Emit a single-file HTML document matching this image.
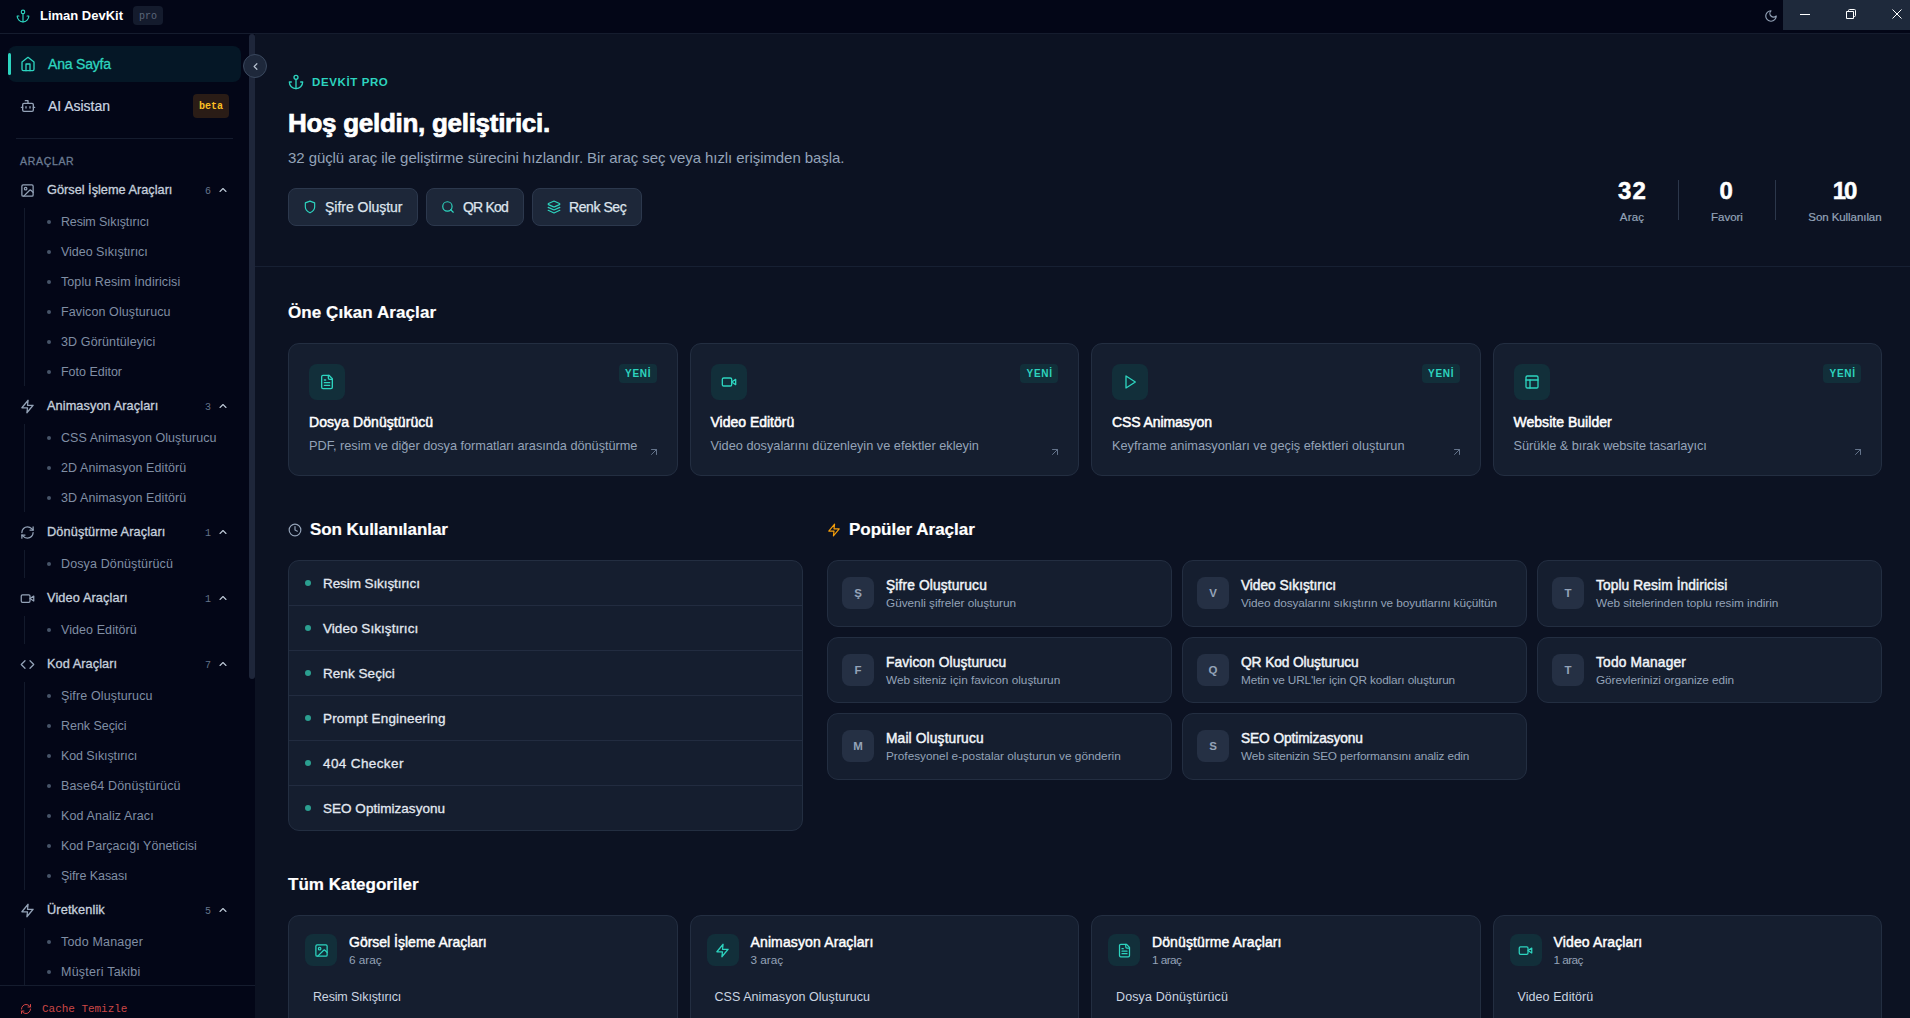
<!DOCTYPE html><html lang="tr"><head><meta charset="utf-8"><title>Liman DevKit</title><style>*{box-sizing:border-box;margin:0;padding:0}
html,body{width:1910px;height:1018px;overflow:hidden;background:#0c1222;font-family:"Liberation Sans",sans-serif;color:#e2e8f0}
.abs{position:absolute;white-space:nowrap}
#tb{position:absolute;left:0;top:0;width:1910px;height:34px;background:#030617;border-bottom:1px solid #151c2e;overflow:hidden}
.brand{left:40px;top:8px;color:#fff;line-height:16px}
.pro{left:133px;top:6px;width:30px;height:19px;border-radius:4px;background:#141b2d;color:#5b667a;font-family:"Liberation Mono",monospace;font-size:10px;line-height:21px;text-align:center}
.wc{left:1783px;top:0;width:127px;height:30px;background:#1e293b}
#sb{position:absolute;left:0;top:34px;width:255px;height:984px;background:#030617;overflow:hidden}
#sb>.abs{margin-top:-34px}
.navact{left:8px;top:46px;width:233px;height:36px;border-radius:8px;background:#051726}
.navbar{left:8px;top:53px;width:3px;height:22px;border-radius:2px;background:#2dd4bf}
.nav{line-height:16px}
.beta{left:193px;top:94px;width:36px;height:24px;border-radius:4px;background:#2a1c16;color:#fbbf24;font-family:"Liberation Mono",monospace;font-weight:700;font-size:10px;line-height:26px;text-align:center}
.sdiv{left:16px;top:138px;width:217px;height:1px;background:#151c2e}
.slabel{left:20px;top:155px;color:#6b7b92;line-height:12px;-webkit-text-stroke:0.3px #6b7b92}
.gname{left:47px;color:#c5cfdc;line-height:20px;-webkit-text-stroke:0.32px #c5cfdc}
.gcnt{left:205px;font-family:"Liberation Mono",monospace;font-size:10px;color:#64748b;line-height:14px}
.gline{left:24px;width:1px;background:#131a2c}
.dot{left:47px;width:4px;height:4px;border-radius:2px;background:#475569}
.sub{left:61px;line-height:18px;color:#808ea4}
.sfoot{left:0;top:985px;width:255px;height:40px;border-top:1px solid #151c2e;background:#030617}
.cache{left:42px;top:15px;line-height:16px;color:#cc4646}
.thumb{left:249px;top:34px;width:6px;height:645px;border-radius:3px;background:#1e263a}
#mn{position:absolute;left:255px;top:34px;width:1655px;height:984px;background:#0c1222;overflow:hidden}
#mn>.abs{margin-left:-255px;margin-top:-34px}
.hero{left:255px;top:34px;width:1655px;height:233px;border-bottom:1px solid #172033}
.hlabel{left:312px;top:75px;color:#2dd4bf;line-height:14px}
.htitle{left:288px;top:107px;color:#fff;line-height:32px;-webkit-text-stroke:0.7px #fff}
.hsub{left:288px;top:149px;line-height:18px;color:#94a3b8}
.qbtn{top:188px;height:38px;border-radius:8px;background:#1d2739;border:1px solid #2c384d}
.qt{left:36px;top:9px;line-height:18px;color:#dde4ed;-webkit-text-stroke:0.25px #dde4ed}
.sn{top:177px;color:#fff;line-height:28px;-webkit-text-stroke:0.5px #fff}
.sl{top:210px;color:#94a3b8;line-height:14px;-webkit-text-stroke:0.2px #94a3b8}
.svd{top:180px;width:1px;height:40px;background:#2c374b}
.h2{color:#fff;line-height:24px;-webkit-text-stroke:0.2px #fff}
.card{background:#151e2f;border:1px solid #232e41;border-radius:11px;overflow:hidden}
.ibox{border-radius:8px;background:#122f3a;display:flex;align-items:center;justify-content:center}
.yeni{right:20px;top:20px;width:38px;height:19px;border-radius:4px;background:#122f3a}
.yt{left:6.500px;top:0;color:#2dd4bf;line-height:19px}
.ft{left:20px;top:68px;color:#fff;line-height:20px;-webkit-text-stroke:0.5px #fff}
.fd{left:20px;top:93px;color:#94a3b8;line-height:18px}
.rdiv{left:0;width:515px;height:1px;background:#222c40}
.rdot{left:16px;width:6px;height:6px;border-radius:3px;background:#2b9f90}
.rt{left:34px;line-height:18px;color:#e2e8f0;-webkit-text-stroke:0.3px #e2e8f0}
.lbox{left:14px;top:16px;width:32px;height:32px;border-radius:8px;background:#253044;color:#94a3b8;font-size:11.500px;font-weight:700;line-height:32px;text-align:center}
.pt{left:58px;top:15px;color:#f1f5f9;line-height:20px;-webkit-text-stroke:0.45px #f1f5f9}
.pd{left:58px;top:34px;color:#94a3b8;line-height:16px}
.ct{left:60px;top:16px;color:#fff;line-height:20px;-webkit-text-stroke:0.45px #fff}
.cs{left:60px;top:36px;color:#94a3b8;line-height:16px}
.ci{left:24px;top:72px;color:#cbd5e1;line-height:18px}
.colbtn{left:243px;top:54px;width:24px;height:24px;border-radius:12px;background:#1e283b;border:1px solid #3a485e;display:flex;align-items:center;justify-content:center}
.brand{font-family:"Liberation Sans",sans-serif;font-size:13px;font-weight:700}
.nav{font-family:"Liberation Sans",sans-serif;font-size:14px;font-weight:400}
.slabel{font-family:"Liberation Sans",sans-serif;font-size:10.5px;font-weight:400}
.gname{font-family:"Liberation Sans",sans-serif;font-size:12.75px;font-weight:400}
.sub{font-family:"Liberation Sans",sans-serif;font-size:12.5px;font-weight:400}
.cache{font-family:"Liberation Mono",monospace;font-size:11px;font-weight:400}
.hlabel{font-family:"Liberation Sans",sans-serif;font-size:11.5px;font-weight:700}
.htitle{font-family:"Liberation Sans",sans-serif;font-size:26px;font-weight:700}
.hsub{font-family:"Liberation Sans",sans-serif;font-size:15px;font-weight:400}
.qt{font-family:"Liberation Sans",sans-serif;font-size:14px;font-weight:400}
.sn{font-family:"Liberation Sans",sans-serif;font-size:24px;font-weight:700}
.sl{font-family:"Liberation Sans",sans-serif;font-size:11.5px;font-weight:400}
.h2{font-family:"Liberation Sans",sans-serif;font-size:17px;font-weight:700}
.yt{font-family:"Liberation Sans",sans-serif;font-size:10px;font-weight:700}
.ft{font-family:"Liberation Sans",sans-serif;font-size:14px;font-weight:400}
.fd{font-family:"Liberation Sans",sans-serif;font-size:12.75px;font-weight:400}
.rt{font-family:"Liberation Sans",sans-serif;font-size:13.5px;font-weight:400}
.pt{font-family:"Liberation Sans",sans-serif;font-size:13.75px;font-weight:400}
.pd{font-family:"Liberation Sans",sans-serif;font-size:11.8px;font-weight:400}
.ct{font-family:"Liberation Sans",sans-serif;font-size:14px;font-weight:400}
.cs{font-family:"Liberation Sans",sans-serif;font-size:11.8px;font-weight:400}
.ci{font-family:"Liberation Sans",sans-serif;font-size:12.5px;font-weight:400}
</style></head><body>
<div id="tb">
<div class="abs" style="left:16px;top:9px"><svg width="14" height="14" viewBox="0 0 24 24" fill="none" stroke="#2dd4bf" stroke-width="2" stroke-linecap="round" stroke-linejoin="round" style="display:block;flex:none;"><path d="M12 22V8"/><path d="M5 12H2a10 10 0 0 0 20 0h-3"/><circle cx="12" cy="5" r="3"/></svg></div>
<div class="abs brand " style="letter-spacing:-0.007px">Liman DevKit</div>
<div class="abs pro"><span>pro</span></div>
<div class="abs" style="left:1764px;top:9px"><svg width="14" height="14" viewBox="0 0 24 24" fill="none" stroke="#94a3b8" stroke-width="2" stroke-linecap="round" stroke-linejoin="round" style="display:block;flex:none;"><path d="M12 3a6 6 0 0 0 9 9 9 9 0 1 1-9-9Z"/></svg></div>
<div class="abs wc"></div>
<svg class="abs" style="left:1783px;top:0" width="127" height="30" viewBox="0 0 127 30" fill="none" stroke="#fff" stroke-width="1"><path d="M17 14.5h10"/><path d="M63.500 11.500h7v7h-7z"/><path d="M65.500 11.500v-1a1 1 0 0 1 1-1h5a1 1 0 0 1 1 1v5a1 1 0 0 1-1 1h-1"/><path d="M109.500 9.500l9 9M118.500 9.500l-9 9"/></svg>
</div>
<div id="sb">
<div class="abs navact"></div><div class="abs navbar"></div>
<div class="abs" style="left:20px;top:56px"><svg width="16" height="16" viewBox="0 0 24 24" fill="none" stroke="#2dd4bf" stroke-width="2" stroke-linecap="round" stroke-linejoin="round" style="display:block;flex:none;"><path d="m3 9 9-7 9 7v11a2 2 0 0 1-2 2H5a2 2 0 0 1-2-2z"/><polyline points="9 22 9 12 15 12 15 22"/></svg></div>
<div class="abs nav " style="left:48px;top:56px;color:#2dd4bf;-webkit-text-stroke:0.3px #2dd4bf;letter-spacing:-0.201px">Ana Sayfa</div>
<div class="abs" style="left:20px;top:98px"><svg width="16" height="16" viewBox="0 0 24 24" fill="none" stroke="#94a3b8" stroke-width="2" stroke-linecap="round" stroke-linejoin="round" style="display:block;flex:none;"><path d="M12 8V4H8"/><rect width="16" height="12" x="4" y="8" rx="2"/><path d="M2 14h2"/><path d="M20 14h2"/><path d="M15 13v2"/><path d="M9 13v2"/></svg></div>
<div class="abs nav " style="left:48px;top:98px;color:#cbd5e1;-webkit-text-stroke:0.2px #cbd5e1;letter-spacing:-0.03px">AI Asistan</div>
<div class="abs beta"><span>beta</span></div>
<div class="abs sdiv"></div>
<div class="abs slabel " style="letter-spacing:0.682px">ARAÇLAR</div>
<div class="abs" style="left:20px;top:182.5px"><svg width="15" height="15" viewBox="0 0 24 24" fill="none" stroke="#94a3b8" stroke-width="2" stroke-linecap="round" stroke-linejoin="round" style="display:block;flex:none;"><rect width="18" height="18" x="3" y="3" rx="2" ry="2"/><circle cx="9" cy="9" r="2"/><path d="m21 15-3.086-3.086a2 2 0 0 0-2.828 0L6 21"/></svg></div>
<div class="abs gname " style="top:180px;">Görsel İşleme Araçları</div>
<div class="abs gcnt" style="top:184.5px">6</div>
<div class="abs" style="left:217px;top:184px"><svg width="12" height="12" viewBox="0 0 24 24" fill="none" stroke="#bcc7d5" stroke-width="2.2" stroke-linecap="round" stroke-linejoin="round" style="display:block;flex:none;"><path d="m18 15-6-6-6 6"/></svg></div>
<div class="abs gline" style="top:208px;height:178px"></div>
<div class="abs dot" style="top:220px"></div><div class="abs sub " style="top:213px;letter-spacing:-0.168px">Resim Sıkıştırıcı</div>
<div class="abs dot" style="top:250px"></div><div class="abs sub " style="top:243px;letter-spacing:-0.032px">Video Sıkıştırıcı</div>
<div class="abs dot" style="top:280px"></div><div class="abs sub " style="top:273px;letter-spacing:0.085px">Toplu Resim İndiricisi</div>
<div class="abs dot" style="top:310px"></div><div class="abs sub " style="top:303px;letter-spacing:0.107px">Favicon Oluşturucu</div>
<div class="abs dot" style="top:340px"></div><div class="abs sub " style="top:333px;letter-spacing:0.12px">3D Görüntüleyici</div>
<div class="abs dot" style="top:370px"></div><div class="abs sub " style="top:363px;letter-spacing:-0.014px">Foto Editor</div>
<div class="abs" style="left:20px;top:398.5px"><svg width="15" height="15" viewBox="0 0 24 24" fill="none" stroke="#94a3b8" stroke-width="2" stroke-linecap="round" stroke-linejoin="round" style="display:block;flex:none;"><polygon points="13 2 3 14 12 14 11 22 21 10 12 10 13 2"/></svg></div>
<div class="abs gname " style="top:396px;letter-spacing:0.08px">Animasyon Araçları</div>
<div class="abs gcnt" style="top:400.5px">3</div>
<div class="abs" style="left:217px;top:400px"><svg width="12" height="12" viewBox="0 0 24 24" fill="none" stroke="#bcc7d5" stroke-width="2.2" stroke-linecap="round" stroke-linejoin="round" style="display:block;flex:none;"><path d="m18 15-6-6-6 6"/></svg></div>
<div class="abs gline" style="top:424px;height:88px"></div>
<div class="abs dot" style="top:436px"></div><div class="abs sub " style="top:429px;letter-spacing:0.05px">CSS Animasyon Oluşturucu</div>
<div class="abs dot" style="top:466px"></div><div class="abs sub " style="top:459px;letter-spacing:0.08px">2D Animasyon Editörü</div>
<div class="abs dot" style="top:496px"></div><div class="abs sub " style="top:489px;letter-spacing:0.08px">3D Animasyon Editörü</div>
<div class="abs" style="left:20px;top:524.5px"><svg width="15" height="15" viewBox="0 0 24 24" fill="none" stroke="#94a3b8" stroke-width="2" stroke-linecap="round" stroke-linejoin="round" style="display:block;flex:none;"><path d="M3 12a9 9 0 0 1 9-9 9.75 9.75 0 0 1 6.74 2.74L21 8"/><path d="M21 3v5h-5"/><path d="M21 12a9 9 0 0 1-9 9 9.75 9.75 0 0 1-6.74-2.74L3 16"/><path d="M8 16H3v5"/></svg></div>
<div class="abs gname " style="top:522px;letter-spacing:0.116px">Dönüştürme Araçları</div>
<div class="abs gcnt" style="top:526.5px">1</div>
<div class="abs" style="left:217px;top:526px"><svg width="12" height="12" viewBox="0 0 24 24" fill="none" stroke="#bcc7d5" stroke-width="2.2" stroke-linecap="round" stroke-linejoin="round" style="display:block;flex:none;"><path d="m18 15-6-6-6 6"/></svg></div>
<div class="abs gline" style="top:550px;height:28px"></div>
<div class="abs dot" style="top:562px"></div><div class="abs sub " style="top:555px;letter-spacing:0.132px">Dosya Dönüştürücü</div>
<div class="abs" style="left:20px;top:590.5px"><svg width="15" height="15" viewBox="0 0 24 24" fill="none" stroke="#94a3b8" stroke-width="2" stroke-linecap="round" stroke-linejoin="round" style="display:block;flex:none;"><path d="m22 8-6 4 6 4V8Z"/><rect width="14" height="12" x="2" y="6" rx="2" ry="2"/></svg></div>
<div class="abs gname " style="top:588px;letter-spacing:0.111px">Video Araçları</div>
<div class="abs gcnt" style="top:592.5px">1</div>
<div class="abs" style="left:217px;top:592px"><svg width="12" height="12" viewBox="0 0 24 24" fill="none" stroke="#bcc7d5" stroke-width="2.2" stroke-linecap="round" stroke-linejoin="round" style="display:block;flex:none;"><path d="m18 15-6-6-6 6"/></svg></div>
<div class="abs gline" style="top:616px;height:28px"></div>
<div class="abs dot" style="top:628px"></div><div class="abs sub " style="top:621px;letter-spacing:0.081px">Video Editörü</div>
<div class="abs" style="left:20px;top:656.5px"><svg width="15" height="15" viewBox="0 0 24 24" fill="none" stroke="#94a3b8" stroke-width="2" stroke-linecap="round" stroke-linejoin="round" style="display:block;flex:none;"><polyline points="16 18 22 12 16 6"/><polyline points="8 6 2 12 8 18"/></svg></div>
<div class="abs gname " style="top:654px;letter-spacing:0.05px">Kod Araçları</div>
<div class="abs gcnt" style="top:658.5px">7</div>
<div class="abs" style="left:217px;top:658px"><svg width="12" height="12" viewBox="0 0 24 24" fill="none" stroke="#bcc7d5" stroke-width="2.2" stroke-linecap="round" stroke-linejoin="round" style="display:block;flex:none;"><path d="m18 15-6-6-6 6"/></svg></div>
<div class="abs gline" style="top:682px;height:208px"></div>
<div class="abs dot" style="top:694px"></div><div class="abs sub " style="top:687px;letter-spacing:0.125px">Şifre Oluşturucu</div>
<div class="abs dot" style="top:724px"></div><div class="abs sub " style="top:717px;letter-spacing:-0.04px">Renk Seçici</div>
<div class="abs dot" style="top:754px"></div><div class="abs sub " style="top:747px;letter-spacing:-0.108px">Kod Sıkıştırıcı</div>
<div class="abs dot" style="top:784px"></div><div class="abs sub " style="top:777px;letter-spacing:0.162px">Base64 Dönüştürücü</div>
<div class="abs dot" style="top:814px"></div><div class="abs sub " style="top:807px;letter-spacing:0.105px">Kod Analiz Aracı</div>
<div class="abs dot" style="top:844px"></div><div class="abs sub " style="top:837px;letter-spacing:0.023px">Kod Parçacığı Yöneticisi</div>
<div class="abs dot" style="top:874px"></div><div class="abs sub " style="top:867px;letter-spacing:-0.072px">Şifre Kasası</div>
<div class="abs" style="left:20px;top:902.5px"><svg width="15" height="15" viewBox="0 0 24 24" fill="none" stroke="#94a3b8" stroke-width="2" stroke-linecap="round" stroke-linejoin="round" style="display:block;flex:none;"><polygon points="13 2 3 14 12 14 11 22 21 10 12 10 13 2"/></svg></div>
<div class="abs gname " style="top:900px;letter-spacing:0.113px">Üretkenlik</div>
<div class="abs gcnt" style="top:904.5px">5</div>
<div class="abs" style="left:217px;top:904px"><svg width="12" height="12" viewBox="0 0 24 24" fill="none" stroke="#bcc7d5" stroke-width="2.2" stroke-linecap="round" stroke-linejoin="round" style="display:block;flex:none;"><path d="m18 15-6-6-6 6"/></svg></div>
<div class="abs gline" style="top:928px;height:148px"></div>
<div class="abs dot" style="top:940px"></div><div class="abs sub " style="top:933px;letter-spacing:0.18px">Todo Manager</div>
<div class="abs dot" style="top:970px"></div><div class="abs sub " style="top:963px;letter-spacing:0.239px">Müşteri Takibi</div>
<div class="abs sfoot">
<div class="abs" style="left:20px;top:17px"><svg width="12" height="12" viewBox="0 0 24 24" fill="none" stroke="#d64545" stroke-width="2" stroke-linecap="round" stroke-linejoin="round" style="display:block;flex:none;"><path d="M3 12a9 9 0 0 1 9-9 9.75 9.75 0 0 1 6.74 2.74L21 8"/><path d="M21 3v5h-5"/><path d="M21 12a9 9 0 0 1-9 9 9.75 9.75 0 0 1-6.74-2.74L3 16"/><path d="M8 16H3v5"/></svg></div><div class="abs cache " style="letter-spacing:-0.036px">Cache Temizle</div>
</div>
<div class="abs thumb"></div>
</div>
<div id="mn">
<div class="abs hero"></div>
<div class="abs" style="left:288px;top:74px"><svg width="16" height="16" viewBox="0 0 24 24" fill="none" stroke="#2dd4bf" stroke-width="2" stroke-linecap="round" stroke-linejoin="round" style="display:block;flex:none;"><path d="M12 22V8"/><path d="M5 12H2a10 10 0 0 0 20 0h-3"/><circle cx="12" cy="5" r="3"/></svg></div>
<div class="abs hlabel " style="letter-spacing:0.611px">DEVKİT PRO</div>
<div class="abs htitle " style="letter-spacing:-0.284px">Hoş geldin, geliştirici.</div>
<div class="abs hsub " style="letter-spacing:-0.072px">32 güçlü araç ile geliştirme sürecini hızlandır. Bir araç seç veya hızlı erişimden başla.</div>
<div class="abs qbtn" style="left:288px;width:130px"><div class="abs" style="left:14px;top:11px"><svg width="14" height="14" viewBox="0 0 24 24" fill="none" stroke="#2dd4bf" stroke-width="2" stroke-linecap="round" stroke-linejoin="round" style="display:block;flex:none;"><path d="M12 22s8-4 8-10V5l-8-3-8 3v7c0 6 8 10 8 10"/></svg></div><div class="abs qt " style="letter-spacing:-0.026px">Şifre Oluştur</div></div>
<div class="abs qbtn" style="left:426px;width:98px"><div class="abs" style="left:14px;top:11px"><svg width="14" height="14" viewBox="0 0 24 24" fill="none" stroke="#2dd4bf" stroke-width="2" stroke-linecap="round" stroke-linejoin="round" style="display:block;flex:none;"><circle cx="11" cy="11" r="8"/><path d="m21 21-4.3-4.3"/></svg></div><div class="abs qt " style="letter-spacing:-0.783px">QR Kod</div></div>
<div class="abs qbtn" style="left:532px;width:110px"><div class="abs" style="left:14px;top:11px"><svg width="14" height="14" viewBox="0 0 24 24" fill="none" stroke="#2dd4bf" stroke-width="2" stroke-linecap="round" stroke-linejoin="round" style="display:block;flex:none;"><path d="m12.83 2.18a2 2 0 0 0-1.66 0L2.6 6.08a1 1 0 0 0 0 1.83l8.58 3.91a2 2 0 0 0 1.66 0l8.58-3.9a1 1 0 0 0 0-1.83Z"/><path d="m22 17.65-9.17 4.16a2 2 0 0 1-1.66 0L2 17.65"/><path d="m22 12.65-9.17 4.16a2 2 0 0 1-1.66 0L2 12.65"/></svg></div><div class="abs qt " style="letter-spacing:-0.429px">Renk Seç</div></div>
<div class="abs sn " style="left:1618.1px;letter-spacing:1.097px">32</div>
<div class="abs sl " style="left:1619.8px;letter-spacing:0.215px">Araç</div>
<div class="abs sn " style="left:1719.5px;letter-spacing:1.641px">0</div>
<div class="abs sl " style="left:1711.0px;letter-spacing:-0.011px">Favori</div>
<div class="abs sn " style="left:1832.7px;letter-spacing:-2.103px">10</div>
<div class="abs sl " style="left:1808.3px;letter-spacing:-0.067px">Son Kullanılan</div>
<div class="abs svd" style="left:1678px"></div><div class="abs svd" style="left:1775px"></div>
<div class="abs h2 " style="left:288px;top:301px;letter-spacing:0.082px">Öne Çıkan Araçlar</div>
<div class="abs card fcard" style="left:288px;top:343px;width:389.5px;height:133px">
<div class="abs ibox" style="left:20px;top:20px;width:36px;height:36px"><svg width="16" height="16" viewBox="0 0 24 24" fill="none" stroke="#2dd4bf" stroke-width="2" stroke-linecap="round" stroke-linejoin="round" style="display:block;flex:none;"><path d="M15 2H6a2 2 0 0 0-2 2v16a2 2 0 0 0 2 2h12a2 2 0 0 0 2-2V7Z"/><path d="M14 2v4a2 2 0 0 0 2 2h4"/><path d="M10 9H8"/><path d="M16 13H8"/><path d="M16 17H8"/></svg></div>
<div class="abs yeni"><div class="abs yt " style="letter-spacing:0.719px">YENİ</div></div>
<div class="abs ft " style="letter-spacing:0.072px">Dosya Dönüştürücü</div><div class="abs fd " style="letter-spacing:-0.032px">PDF, resim ve diğer dosya formatları arasında dönüştürme</div>
<div class="abs" style="right:17px;top:102px"><svg width="12" height="12" viewBox="0 0 24 24" fill="none" stroke="#64748b" stroke-width="2" stroke-linecap="round" stroke-linejoin="round" style="display:block;flex:none;"><path d="M7 7h10v10"/><path d="M7 17 17 7"/></svg></div>
</div>
<div class="abs card fcard" style="left:689.5px;top:343px;width:389.5px;height:133px">
<div class="abs ibox" style="left:20px;top:20px;width:36px;height:36px"><svg width="16" height="16" viewBox="0 0 24 24" fill="none" stroke="#2dd4bf" stroke-width="2" stroke-linecap="round" stroke-linejoin="round" style="display:block;flex:none;"><path d="m22 8-6 4 6 4V8Z"/><rect width="14" height="12" x="2" y="6" rx="2" ry="2"/></svg></div>
<div class="abs yeni"><div class="abs yt " style="letter-spacing:0.719px">YENİ</div></div>
<div class="abs ft " style="letter-spacing:-0.009px">Video Editörü</div><div class="abs fd " >Video dosyalarını düzenleyin ve efektler ekleyin</div>
<div class="abs" style="right:17px;top:102px"><svg width="12" height="12" viewBox="0 0 24 24" fill="none" stroke="#64748b" stroke-width="2" stroke-linecap="round" stroke-linejoin="round" style="display:block;flex:none;"><path d="M7 7h10v10"/><path d="M7 17 17 7"/></svg></div>
</div>
<div class="abs card fcard" style="left:1091px;top:343px;width:389.5px;height:133px">
<div class="abs ibox" style="left:20px;top:20px;width:36px;height:36px"><svg width="16" height="16" viewBox="0 0 24 24" fill="none" stroke="#2dd4bf" stroke-width="2" stroke-linecap="round" stroke-linejoin="round" style="display:block;flex:none;"><polygon points="6 3 20 12 6 21 6 3"/></svg></div>
<div class="abs yeni"><div class="abs yt " style="letter-spacing:0.719px">YENİ</div></div>
<div class="abs ft " style="letter-spacing:-0.098px">CSS Animasyon</div><div class="abs fd " style="letter-spacing:0.011px">Keyframe animasyonları ve geçiş efektleri oluşturun</div>
<div class="abs" style="right:17px;top:102px"><svg width="12" height="12" viewBox="0 0 24 24" fill="none" stroke="#64748b" stroke-width="2" stroke-linecap="round" stroke-linejoin="round" style="display:block;flex:none;"><path d="M7 7h10v10"/><path d="M7 17 17 7"/></svg></div>
</div>
<div class="abs card fcard" style="left:1492.5px;top:343px;width:389.5px;height:133px">
<div class="abs ibox" style="left:20px;top:20px;width:36px;height:36px"><svg width="16" height="16" viewBox="0 0 24 24" fill="none" stroke="#2dd4bf" stroke-width="2" stroke-linecap="round" stroke-linejoin="round" style="display:block;flex:none;"><rect width="18" height="18" x="3" y="3" rx="2"/><path d="M3 9h18"/><path d="M9 21V9"/></svg></div>
<div class="abs yeni"><div class="abs yt " style="letter-spacing:0.719px">YENİ</div></div>
<div class="abs ft " style="letter-spacing:0.029px">Website Builder</div><div class="abs fd " style="letter-spacing:-0.065px">Sürükle &amp; bırak website tasarlayıcı</div>
<div class="abs" style="right:17px;top:102px"><svg width="12" height="12" viewBox="0 0 24 24" fill="none" stroke="#64748b" stroke-width="2" stroke-linecap="round" stroke-linejoin="round" style="display:block;flex:none;"><path d="M7 7h10v10"/><path d="M7 17 17 7"/></svg></div>
</div>
<div class="abs" style="left:288px;top:523px"><svg width="14" height="14" viewBox="0 0 24 24" fill="none" stroke="#94a3b8" stroke-width="2" stroke-linecap="round" stroke-linejoin="round" style="display:block;flex:none;"><circle cx="12" cy="12" r="10"/><polyline points="12 6 12 12 16 14"/></svg></div>
<div class="abs h2 " style="left:310px;top:518px;letter-spacing:-0.06px">Son Kullanılanlar</div>
<div class="abs card" style="left:288px;top:560px;width:515px;height:271px">
<div class="abs rdot" style="top:19px"></div><div class="abs rt " style="top:14px;letter-spacing:-0.085px">Resim Sıkıştırıcı</div>
<div class="abs rdiv" style="top:44px"></div>
<div class="abs rdot" style="top:64px"></div><div class="abs rt " style="top:59px;letter-spacing:0.056px">Video Sıkıştırıcı</div>
<div class="abs rdiv" style="top:89px"></div>
<div class="abs rdot" style="top:109px"></div><div class="abs rt " style="top:104px;letter-spacing:0.052px">Renk Seçici</div>
<div class="abs rdiv" style="top:134px"></div>
<div class="abs rdot" style="top:154px"></div><div class="abs rt " style="top:149px;letter-spacing:0.181px">Prompt Engineering</div>
<div class="abs rdiv" style="top:179px"></div>
<div class="abs rdot" style="top:199px"></div><div class="abs rt " style="top:194px;letter-spacing:0.385px">404 Checker</div>
<div class="abs rdiv" style="top:224px"></div>
<div class="abs rdot" style="top:244px"></div><div class="abs rt " style="top:239px;letter-spacing:0.028px">SEO Optimizasyonu</div>
</div>
<div class="abs" style="left:827px;top:523px"><svg width="14" height="14" viewBox="0 0 24 24" fill="none" stroke="#f59e0b" stroke-width="2" stroke-linecap="round" stroke-linejoin="round" style="display:block;flex:none;"><polygon points="13 2 3 14 12 14 11 22 21 10 12 10 13 2"/></svg></div>
<div class="abs h2 " style="left:849px;top:518px;letter-spacing:-0.013px">Popüler Araçlar</div>
<div class="abs card pcard" style="left:827px;top:560px;width:345px;height:67px">
<div class="abs lbox"><span>Ş</span></div><div class="abs pt " style="letter-spacing:0.147px">Şifre Oluşturucu</div><div class="abs pd " style="letter-spacing:-0.019px">Güvenli şifreler oluşturun</div></div>
<div class="abs card pcard" style="left:1182px;top:560px;width:345px;height:67px">
<div class="abs lbox"><span>V</span></div><div class="abs pt " style="letter-spacing:-0.053px">Video Sıkıştırıcı</div><div class="abs pd " style="letter-spacing:-0.081px">Video dosyalarını sıkıştırın ve boyutlarını küçültün</div></div>
<div class="abs card pcard" style="left:1537px;top:560px;width:345px;height:67px">
<div class="abs lbox"><span>T</span></div><div class="abs pt " style="letter-spacing:0.098px">Toplu Resim İndiricisi</div><div class="abs pd " style="letter-spacing:-0.028px">Web sitelerinden toplu resim indirin</div></div>
<div class="abs card pcard" style="left:827px;top:637px;width:345px;height:66px">
<div class="abs lbox"><span>F</span></div><div class="abs pt " style="letter-spacing:0.103px">Favicon Oluşturucu</div><div class="abs pd " >Web siteniz için favicon oluşturun</div></div>
<div class="abs card pcard" style="left:1182px;top:637px;width:345px;height:66px">
<div class="abs lbox"><span>Q</span></div><div class="abs pt " style="letter-spacing:-0.101px">QR Kod Oluşturucu</div><div class="abs pd " style="letter-spacing:-0.124px">Metin ve URL'ler için QR kodları oluşturun</div></div>
<div class="abs card pcard" style="left:1537px;top:637px;width:345px;height:66px">
<div class="abs lbox"><span>T</span></div><div class="abs pt " style="letter-spacing:0.181px">Todo Manager</div><div class="abs pd " style="letter-spacing:-0.057px">Görevlerinizi organize edin</div></div>
<div class="abs card pcard" style="left:827px;top:713px;width:345px;height:67px">
<div class="abs lbox"><span>M</span></div><div class="abs pt " style="letter-spacing:0.148px">Mail Oluşturucu</div><div class="abs pd " >Profesyonel e-postalar oluşturun ve gönderin</div></div>
<div class="abs card pcard" style="left:1182px;top:713px;width:345px;height:67px">
<div class="abs lbox"><span>S</span></div><div class="abs pt " style="letter-spacing:-0.113px">SEO Optimizasyonu</div><div class="abs pd " style="letter-spacing:-0.13px">Web sitenizin SEO performansını analiz edin</div></div>
<div class="abs h2 " style="left:288px;top:873px;letter-spacing:0.01px">Tüm Kategoriler</div>
<div class="abs card ccard" style="left:288px;top:915px;width:389.5px;height:140px">
<div class="abs ibox" style="left:16px;top:18px;width:32px;height:32px"><svg width="15" height="15" viewBox="0 0 24 24" fill="none" stroke="#2dd4bf" stroke-width="2" stroke-linecap="round" stroke-linejoin="round" style="display:block;flex:none;"><rect width="18" height="18" x="3" y="3" rx="2" ry="2"/><circle cx="9" cy="9" r="2"/><path d="m21 15-3.086-3.086a2 2 0 0 0-2.828 0L6 21"/></svg></div>
<div class="abs ct " >Görsel İşleme Araçları</div><div class="abs cs " style="letter-spacing:-0.039px">6 araç</div><div class="abs ci " style="letter-spacing:-0.168px">Resim Sıkıştırıcı</div></div>
<div class="abs card ccard" style="left:689.5px;top:915px;width:389.5px;height:140px">
<div class="abs ibox" style="left:16px;top:18px;width:32px;height:32px"><svg width="15" height="15" viewBox="0 0 24 24" fill="none" stroke="#2dd4bf" stroke-width="2" stroke-linecap="round" stroke-linejoin="round" style="display:block;flex:none;"><polygon points="13 2 3 14 12 14 11 22 21 10 12 10 13 2"/></svg></div>
<div class="abs ct " style="letter-spacing:0.129px">Animasyon Araçları</div><div class="abs cs " style="letter-spacing:-0.039px">3 araç</div><div class="abs ci " style="letter-spacing:0.05px">CSS Animasyon Oluşturucu</div></div>
<div class="abs card ccard" style="left:1091px;top:915px;width:389.5px;height:140px">
<div class="abs ibox" style="left:16px;top:18px;width:32px;height:32px"><svg width="15" height="15" viewBox="0 0 24 24" fill="none" stroke="#2dd4bf" stroke-width="2" stroke-linecap="round" stroke-linejoin="round" style="display:block;flex:none;"><path d="M15 2H6a2 2 0 0 0-2 2v16a2 2 0 0 0 2 2h12a2 2 0 0 0 2-2V7Z"/><path d="M14 2v4a2 2 0 0 0 2 2h4"/><path d="M10 9H8"/><path d="M16 13H8"/><path d="M16 17H8"/></svg></div>
<div class="abs ct " style="letter-spacing:0.105px">Dönüştürme Araçları</div><div class="abs cs " style="letter-spacing:-0.559px">1 araç</div><div class="abs ci " style="letter-spacing:0.132px">Dosya Dönüştürücü</div></div>
<div class="abs card ccard" style="left:1492.5px;top:915px;width:389.5px;height:140px">
<div class="abs ibox" style="left:16px;top:18px;width:32px;height:32px"><svg width="15" height="15" viewBox="0 0 24 24" fill="none" stroke="#2dd4bf" stroke-width="2" stroke-linecap="round" stroke-linejoin="round" style="display:block;flex:none;"><path d="m22 8-6 4 6 4V8Z"/><rect width="14" height="12" x="2" y="6" rx="2" ry="2"/></svg></div>
<div class="abs ct " style="letter-spacing:0.138px">Video Araçları</div><div class="abs cs " style="letter-spacing:-0.559px">1 araç</div><div class="abs ci " style="letter-spacing:0.081px">Video Editörü</div></div>
</div>
<div class="abs colbtn"><svg width="11" height="11" viewBox="0 0 24 24" fill="none" stroke="#b6c0cf" stroke-width="2.6" stroke-linecap="round" stroke-linejoin="round" style="display:block;flex:none;"><path d="m15 18-6-6 6-6"/></svg></div>
</body></html>
